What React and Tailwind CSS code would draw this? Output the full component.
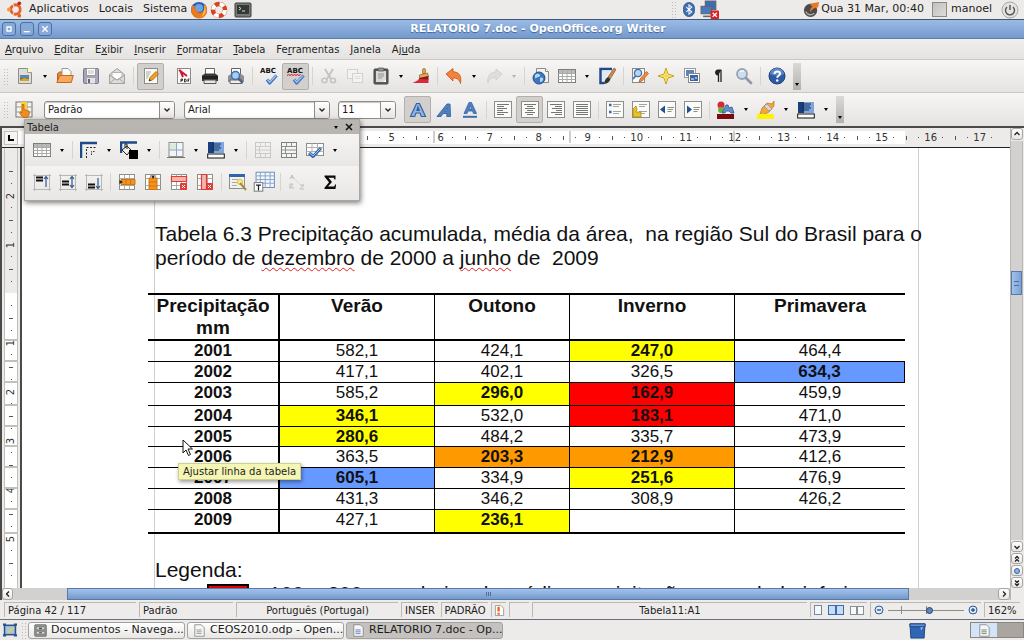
import React, { useState } from 'react';
import clsx from 'clsx';

/* ---------- icons, all drawn on an 18px grid ---------- */

const Svg = ({ children, className = 'size-[18px]' }) => (
    <svg viewBox="0 0 18 18" className={clsx('shrink-0', className)} fill="none" aria-hidden="true">
        {children}
    </svg>
);

const Page = ({ x = 3, y = 1, w = 12, h = 16 }) => (
    <rect x={x + 0.5} y={y + 0.5} width={w - 1} height={h - 1} fill="#fafaf9" stroke="#8a8c87" />
);

const NewDoc = () => (
    <Svg>
        <path d="M2.500 1.500h9l4 4v11h-13z" fill="#deded9" stroke="#8b8d88" />
        <path d="M11.500 1.500v4h4" fill="#fff" stroke="#9b9d98" />
        <rect x="4" y="8" width="9" height="6" fill="#7a6a3c" />
        <rect x="4" y="8" width="9" height="3" fill="#5f86a8" />
        <path d="M4 13l4-2 5 1v2H4z" fill="#d3a336" />
        <circle cx="14" cy="3" r="2" fill="#fff6bd" />
    </Svg>
);

const Open = () => (
    <Svg>
        <path d="M1.500 15V6.500l2-1.500h3l1 1.500h4V15z" fill="#e08a3c" stroke="#b8601b" />
        <path d="M6 1.500h6l3 3V10H6z" fill="#fbfbfb" stroke="#999" />
        <path d="M.8 15.500l3-7h13.500l-2 7z" fill="#f7a85a" stroke="#c7681c" />
    </Svg>
);

const Save = () => (
    <Svg>
        <rect x="1.500" y="1.500" width="15" height="15" rx="1" fill="#a8a6b5" stroke="#777686" />
        <rect x="4.500" y="1.500" width="9" height="7" fill="#fff" stroke="#9a98a8" />
        <path d="M6 4h6M6 6h6" stroke="#bbb" />
        <rect x="5" y="11" width="8" height="5.500" fill="#e4e3ea" />
        <rect x="6" y="12" width="2" height="4" fill="#666" />
    </Svg>
);

const Mail = () => (
    <Svg>
        <path d="M1.500 7.500L9 1.500l7.500 6v9h-15z" fill="#dcdcd9" stroke="#a2a3a0" />
        <path d="M4 5.500h10V10l-5 3-5-3z" fill="#fff" stroke="#b3b4b1" />
        <path d="M1.500 16.500L7 11.500M16.500 16.500L11 11.500M1.500 8L9 13l7.500-5" stroke="#a2a3a0" />
    </Svg>
);

const EditFile = () => (
    <Svg>
        <Page x={2} y={1} w={14} h={16} />
        <path d="M4 5h5M4 7h4M4 9h3M4 11h2" stroke="#a9aba7" />
        <path d="M7 14l1-3.500 6-6 2.500 2.500-6 6z" fill="#f3a01e" stroke="#a0620b" strokeWidth=".8" />
        <path d="M7 14l.5-2 1.500 1.500z" fill="#222" />
    </Svg>
);

const Pdf = () => (
    <Svg>
        <Page x={2} y={1} w={14} h={16} />
        <path d="M4 3l8 6M5 3l3 7" stroke="#d4152a" strokeWidth="2" />
        <path d="M6 15v-3h1.500v1.500H6M9.500 12v3h1l.7-1v-1l-.7-1zM13 15v-3h1.500M13 13.500h1" stroke="#222" strokeWidth=".9" />
    </Svg>
);

const Print = () => (
    <Svg>
        <path d="M4.500 1.500h9V8h-9z" fill="#fff" stroke="#666" />
        <path d="M1 8.500l3-2h10l3 2V14H1z" fill="#3b3b3b" />
        <rect x="1" y="9" width="16" height="3" fill="#222" />
        <path d="M3 13h12v3.500H3z" fill="#e6e6e6" stroke="#555" />
    </Svg>
);

const Preview = () => (
    <Svg>
        <path d="M4.500 1.500h9V8h-9z" fill="#fff" stroke="#666" />
        <path d="M1 9l3-2h10l3 2v6H1z" fill="#8b8e92" />
        <path d="M3 13h12v3.500H3z" fill="#eee" stroke="#666" />
        <circle cx="8.500" cy="8.500" r="4" fill="#a9cdf0" stroke="#3f6fae" strokeWidth="1.500" />
        <path d="M11.500 11.500l4 4.500" stroke="#46607f" strokeWidth="2" />
    </Svg>
);

const Check = () => (
    <>
        <path d="M7 12.500l2.700 3.500L16.500 8.500" stroke="#3f73bb" strokeWidth="3.200" strokeLinejoin="round" />
        <path d="M7.500 12.500l2.200 2.800L16 8.800" stroke="#a3c4ee" strokeWidth="1.300" />
    </>
);

const Letters = () => (
    <text x="0" y="6" fontSize="7" fontWeight="700" fontFamily="DejaVu Sans" fill="#111">ABC</text>
);

const Spell = () => (
    <Svg className="size-[18px] overflow-visible">
        <Letters />
        <Check />
    </Svg>
);

const AutoSpell = () => (
    <Svg className="size-[18px] overflow-visible">
        <Letters />
        <path d="M0 8.500l1.500-1 1.500 1 1.500-1 1.500 1 1.500-1 1.500 1 1.500-1 1.500 1 1.500-1" stroke="#d11" />
        <Check />
    </Svg>
);

const Cut = () => (
    <Svg>
        <path d="M5 2l6 10M13 2L7 12" stroke="#c4c3c1" strokeWidth="1.800" />
        <ellipse cx="4.500" cy="13.500" rx="2.500" ry="2.200" stroke="#c4c3c1" strokeWidth="1.600" />
        <ellipse cx="13" cy="13.500" rx="2.500" ry="2.200" stroke="#c4c3c1" strokeWidth="1.600" />
    </Svg>
);

const Copy = () => (
    <Svg>
        <rect x="1.500" y="2.500" width="10" height="9" fill="#f4f3f2" stroke="#d2d1cf" />
        <rect x="6.500" y="6.500" width="10" height="9" fill="#f4f3f2" stroke="#d2d1cf" />
        <path d="M8.500 9.500h6M8.500 11.500h6" stroke="#dddcda" />
    </Svg>
);

const Paste = () => (
    <Svg>
        <rect x="2" y="2" width="14" height="15" rx="1" fill="#5c5e5b" stroke="#444" />
        <rect x="4" y="4" width="10" height="11" fill="#d9dad7" />
        <rect x="6" y="1" width="6" height="3" rx="1" fill="#999" stroke="#444" strokeWidth=".7" />
        <path d="M6 7h6M6 9h6M6 11h4" stroke="#8f918d" />
        <path d="M14 12v3h-3z" fill="#fff" />
    </Svg>
);

const Brush = () => (
    <Svg>
        <path d="M10.500 3a1.500 1.500 0 113 0l-.3 3.500h-2.500z" fill="#e0ab52" stroke="#8e5f1c" strokeWidth=".7" />
        <path d="M7.500 8l8-2 1 3.500-9 2z" fill="#e0ab52" stroke="#8e5f1c" strokeWidth=".7" />
        <path d="M7.500 11l9-2v4l-10.500.5z" fill="#8c1622" />
        <path d="M1 15.500c4-1 6-4 8-3.500l7.500.5V16H1z" fill="#dc2740" />
    </Svg>
);

const Undo = () => (
    <Svg>
        <path d="M1 7l7-5.500v3.300c6 0 9 4 7.500 11.700-1-4-3.500-5.500-7.500-5.500v3z" fill="#f4823a" stroke="#c4541a" strokeWidth=".8" strokeLinejoin="round" />
    </Svg>
);

const Redo = () => (
    <Svg>
        <path d="M17 7l-6-5v3C5 5 2 9 3 16c1-4 3.500-5.500 8-5.500V13z" fill="#dededc" stroke="#cdccca" strokeWidth=".8" />
    </Svg>
);

const Link = () => (
    <Svg>
        <path d="M4.500 1.500h9l3 3v11h-12z" fill="#f2f3f2" stroke="#8a8c87" />
        <path d="M13.500 1.500v3h3" stroke="#8a8c87" fill="#fff" />
        <circle cx="7" cy="11" r="6" fill="#3d76bd" stroke="#21508d" />
        <path d="M3 8c2-2 4-1 5 0s-1 2-2 2-2 2-3 1zM8 11c2-1 4 0 3 2s-3 3-3 1z" fill="#b7d5f3" />
    </Svg>
);

const Table = () => (
    <Svg>
        <rect x=".5" y="2.500" width="17" height="13" fill="#fff" stroke="#7c7e7a" />
        <rect x="1" y="3" width="16" height="3" fill="#b9bbb7" />
        <path d="M.5 6.500h17M.5 9.500h17M.5 12.500h17M4.500 3v12.500M9 3v12.500M13.500 3v12.500" stroke="#a9aba7" />
    </Svg>
);

const Draw = () => (
    <Svg>
        <path d="M14 2H2.500v14H6" fill="#fff" stroke="#1f4b8a" strokeWidth="2.500" />
        <path d="M4 3.500h9L6 14H4z" fill="#dfe8f4" />
        <path d="M10 10l6-9 2 1.500-5.500 9z" fill="#c98a54" stroke="#7a4a22" strokeWidth=".6" />
        <path d="M6 17c0-3 2-6 4-7l2.500 2c-1 3-3 4.500-6.500 5z" fill="#333" />
    </Svg>
);

const Find = () => (
    <Svg>
        <Page x={1} y={1} w={13} h={15} />
        <circle cx="7" cy="6" r="3.600" fill="#b7d4f2" stroke="#3e6fae" strokeWidth="1.300" />
        <path d="M4.500 9L2 12" stroke="#3e6fae" strokeWidth="1.800" />
        <path d="M8 15l1-3 6.500-7.500 2 2L11 14z" fill="#f28a3c" stroke="#b8541a" strokeWidth=".7" />
    </Svg>
);

const Navigator = () => (
    <Svg>
        <path d="M9 1l2 6 6 2-6 2-2 6-2-6-6-2 6-2z" fill="#fdf08a" stroke="#c8a516" strokeLinejoin="round" />
        <path d="M9 5v8M5 9h8" stroke="#e8c93a" />
    </Svg>
);

const Gallery = () => (
    <Svg>
        <rect x="1.500" y="1.500" width="11" height="9" fill="#fff" stroke="#999" />
        <rect x="3" y="3" width="8" height="6" fill="#5a84bb" />
        <rect x="5.500" y="6.500" width="11" height="9" fill="#fff" stroke="#888" />
        <rect x="7" y="8" width="8" height="6" fill="#3a66a3" />
        <path d="M8 12h3M12 11h2" stroke="#fff" />
    </Svg>
);

const Pilcrow = () => (
    <Svg>
        <path d="M12 3v12M9.500 3v12" stroke="#222" strokeWidth="1.300" />
        <path d="M12.500 2.500H9c-4 0-4 6 0 6z" fill="#222" />
    </Svg>
);

const Zoom = () => (
    <Svg>
        <circle cx="7" cy="7" r="5" fill="#c8def4" stroke="#9aa3ad" strokeWidth="1.800" />
        <path d="M11 11l5 5" stroke="#8f99a5" strokeWidth="2.800" strokeLinecap="round" />
        <path d="M5 5c1-1.500 3-1.500 4-.5" stroke="#fff" strokeWidth="1.200" />
    </Svg>
);

const Help = () => (
    <Svg>
        <circle cx="9" cy="9" r="8" fill="#2c5ba3" stroke="#1c3f78" />
        <path d="M2 7a7 6 0 0114 0c-4 2-10 2-14 0z" fill="#5d88c8" />
        <path d="M6.500 7c0-3.500 5.500-3.200 5.500-.3 0 2-2.800 2-2.800 4" stroke="#fff" strokeWidth="2" />
        <circle cx="9.200" cy="13.500" r="1.200" fill="#fff" />
    </Svg>
);

const Styles = () => (
    <Svg>
        <rect x="1" y="1" width="16" height="15" fill="#f3f3f0" stroke="#777" />
        <path d="M1 6h16M1 11h16M12 1v15" stroke="#999" />
        <rect x="6" y="1" width="6" height="15" fill="#f7d23e" />
        <path d="M7 3.500h2v5l5 1.500c1 3 0 5-2 6.500H8L4.500 12l1-1.500L7 12z" fill="#f08d24" stroke="#b55d0b" strokeWidth=".7" />
    </Svg>
);

const Bold = () => (
    <Svg>
        <path d="M1.500 15.500L7.500 2.500h3l6 13h-4.200L11 12H7l-1.300 3.500zM8 9.500h2.200L9 6z" fill="#8fb4e3" stroke="#33629f" fillRule="evenodd" strokeWidth="1.200" />
    </Svg>
);

const Italic = () => (
    <Svg>
        <path d="M2 15.500L12 3h3l.5 12.500h-3.700L12 12.500H8L6 15.500zM9.800 10H12V7z" fill="#4f80c0" stroke="#33629f" fillRule="evenodd" strokeWidth=".9" />
    </Svg>
);

const Underline = () => (
    <Svg>
        <path d="M3 12.500L8 1.500h2.500l5 11h-3l-1-2.500H7l-1 2.500zM8 8h2.600L9.300 4.500z" fill="#4f80c0" stroke="#33629f" fillRule="evenodd" strokeWidth=".8" />
        <path d="M2 15.800h14" stroke="#3a6cb0" strokeWidth="2" />
    </Svg>
);

const Align = ({ d }) => (
    <Svg>
        <rect x=".5" y=".5" width="17" height="16" fill="#fbfbfa" stroke="#8d8f8b" />
        <path d={d} stroke="#747673" />
    </Svg>
);

const ListIcon = ({ numbered }) => (
    <Svg>
        <rect x=".5" y=".5" width="17" height="16" fill="#fbfbfa" stroke="#8d8f8b" />
        <path d="M7 3.500h8M7 5.500h6M7 10.500h8M7 12.500h6" stroke="#a2a49f" />
        {numbered ? (
            <path d="M1 16V8l3-3 1 3-1 3h5v5z" fill="#e7c22b" stroke="#a88409" strokeWidth=".7" />
        ) : (
            <path d="M3 4h2.500M3 11h2.500" stroke="#3a66a3" strokeWidth="2.500" />
        )}
    </Svg>
);

const Indent = ({ back }) => (
    <Svg>
        <rect x=".5" y=".5" width="17" height="16" fill="#fbfbfa" stroke="#8d8f8b" />
        <path d={back ? 'M2 8.500l5-4v8z' : 'M3 4.500l5 4-5 4z'} fill="#244f8f" />
        <path d="M9.500 6.500H16M9.500 8.500H15M9.500 10.500h4" stroke="#8b8d88" />
    </Svg>
);

const FontColor = () => (
    <Svg>
        <circle cx="4" cy="4" r="3.500" fill="#d8283a" />
        <circle cx="4" cy="9" r="3" fill="#62b544" />
        <path d="M5 12L9 4h2l1 3 3-1 2 6h-3l-2-2H9l-1 2z" fill="#6391cd" stroke="#2b5796" strokeWidth=".8" />
        <rect y="13" width="17" height="5" fill="#7c0a0c" />
    </Svg>
);

const Highlight = () => (
    <Svg>
        <path d="M3 13l2-6 5-5 5 1 2-3v5l-5 6-6 3z" fill="#f2a83c" stroke="#b8741a" strokeWidth=".7" />
        <path d="M7 5l5 5 3-2-5-5z" fill="#d5d8dc" stroke="#888" strokeWidth=".6" />
        <rect y="13" width="17" height="5" fill="#fdf500" />
    </Svg>
);

const Background = () => (
    <Svg>
        <path d="M1 1h16v11H1z" fill="#7ea6dc" />
        <path d="M1 1h6v11H1z" fill="#163f7c" />
        <path d="M5 3h9M5 5h8M5 7h9M5 9h7" stroke="#10305f" />
        <rect x=".7" y="13" width="16.600" height="4" fill="#fff" stroke="#111" />
    </Svg>
);

const LineStyle = () => (
    <Svg>
        <path d="M1 17V2h16" stroke="#1d4a87" strokeWidth="2.500" />
        <path d="M6.500 17V6.500H17" stroke="#222" strokeDasharray="2 1.500" />
        <path d="M11.500 14v-3.500H15" stroke="#333" strokeDasharray="1.500 1" />
    </Svg>
);

const LineColor = () => (
    <Svg>
        <path d="M1 12V1.500h16" stroke="#1d4a87" strokeWidth="2.500" />
        <path d="M2 9l5-4 4 4-4 5z" fill="#eee" stroke="#222" />
        <path d="M5 7V3h2v5" stroke="#222" />
        <rect x="9" y="9" width="9" height="9" fill="#000" />
    </Svg>
);

const Borders = () => (
    <Svg>
        <rect x="2" y="1.500" width="14" height="14" fill="#f4f4f2" stroke="#8c8e8a" />
        <rect x="3" y="2.500" width="6" height="6" fill="#dcebd9" />
        <path d="M9.500 1.500v14M2 9h14" stroke="#8ba6c9" />
        <path d="M0 16.500h18" stroke="#777" />
    </Svg>
);

const CellGrid = ({ faded, split }) => (
    <Svg>
        <g opacity={faded ? 0.35 : 1}>
            <rect x="1.500" y="1.500" width="15" height="15" fill="#f5f5f3" stroke="#7d7f7b" />
            <path d="M1.500 5.500h15M1.500 12.500h15M6.500 1.500v4M11.500 1.500v4M6.500 12.500v4M11.500 12.500v4" stroke="#8c8e8a" />
            {split && <path d="M1.500 9h15M5.500 5v8" stroke="#8c8e8a" />}
        </g>
    </Svg>
);

const AutoFormat = () => (
    <Svg>
        <rect x=".5" y="2.500" width="17" height="12" fill="#fff" stroke="#8c8e8a" />
        <path d="M.5 6.500h17M.5 10.500h17M6 2.500v12M11.500 2.500v12" stroke="#b1b3af" />
        <path d="M3 12l4 3.500L15 7" stroke="#3468ae" strokeWidth="3" strokeLinejoin="round" />
        <path d="M3.500 12l3.500 3L14.500 7.500" stroke="#a5c5ee" />
    </Svg>
);

const VAlign = ({ lines, arrow }) => (
    <Svg>
        <path d="M1.500 1v17M16.500 1v17M0 2.500h18M0 16.500h18" stroke="#b7b8b5" />
        <path d={lines} stroke="#111" strokeWidth="1.800" />
        <path d={arrow} stroke="#315a90" strokeWidth="1.200" />
    </Svg>
);

const InsertCells = ({ column }) => (
    <Svg>
        <rect x="1.500" y="1.500" width="15" height="15" fill="#fff" stroke="#8c8e8a" />
        <path d="M1.500 5.500h15M1.500 12.500h15M6.500 1.500v15M11.500 1.500v15" stroke="#a9aba7" />
        {column ? (
            <path d="M5 5h8v11.500H5zM5 9h8M5 13h8" fill="#f6931e" stroke="#d07412" />
        ) : (
            <path d="M3 6.500h14v5H3zM8 6.500v5M12.500 6.500v5" fill="#f6931e" stroke="#d07412" />
        )}
        <path d={column ? 'M7 2.500h4L9 6z' : 'M1.500 7v4L5 9z'} fill="#222" />
    </Svg>
);

const DeleteCells = ({ column }) => (
    <Svg>
        <rect x="1.500" y="1.500" width="15" height="15" fill="#fff" stroke="#8c8e8a" />
        <path d="M1.500 5.500h15M1.500 12.500h15M6.500 1.500v15M11.500 1.500v15" stroke="#a9aba7" />
        <path d={column ? 'M5.500 1.500h5v15h-5z' : 'M1.500 3.500h15v5h-15z'} fill="#f7b5b0" stroke="#e03a35" strokeWidth="1.200" />
        <rect x="10" y="10" width="7" height="7" rx="1" fill="#e23c36" />
        <path d="M12 12l3 3M15 12l-3 3" stroke="#fff" />
    </Svg>
);

const AutoFormatStyles = () => (
    <Svg>
        <rect x=".5" y="1.500" width="15" height="14" fill="#f2f1ea" stroke="#8c8e8a" />
        <rect x="0" y="1" width="16" height="3" fill="#2f65ad" />
        <path d="M3 6.500h6M3 9.500h5M3 12.500h5" stroke="#a9aba7" />
        <circle cx="11" cy="9" r="2.500" fill="#fff29a" stroke="#d8bb2c" />
        <path d="M11 10l6 7" stroke="#a58a3d" strokeWidth="2" />
    </Svg>
);

const Properties = () => (
    <Svg className="size-[22px]">
        <rect x="2.500" y="1" width="15" height="12.500" fill="#f4f7fb" stroke="#6c8cb8" strokeWidth=".8" />
        <path d="M2.500 4h15M2.500 7h15M2.500 10h15M6 1v12.500M10 1v12.500M14 1v12.500" stroke="#89a4c9" strokeWidth=".8" />
        <rect x="1" y="9.500" width="7" height="7" fill="#fff" stroke="#777" strokeWidth=".8" />
        <path d="M2.500 11.500h4M4.500 11.500V16" stroke="#222" />
    </Svg>
);

const Sort = () => (
    <Svg>
        <path d="M2 6l2-4 2 4M3 4.500h2" stroke="#bebdbb" />
        <path d="M2 15v-4h3l-3 4h4M12 12h4l-4 4h4" stroke="#bebdbb" />
        <path d="M6 6l6 5" stroke="#cfcecc" strokeDasharray="1.500 1" />
    </Svg>
);

const Sum = () => (
    <Svg>
        <path d="M3.500 2.500h11v4h-1l-.8-1.800H7.500L11 9l-4 4.500h6.300l.8-2h1L14.500 16h-11v-1.200L8 9.200 3.500 3.700z" fill="#0a0a0a" />
    </Svg>
);

/* ---------- toolbar pieces ---------- */

const ToolButton = ({ label, icon, pressed }) => (
    <button
        type="button"
        title={label}
        aria-label={label}
        aria-pressed={pressed}
        className={clsx(
            'flex shrink-0 items-center justify-center h-[27px]',
            pressed ? 'w-[27px] rounded-[2px] border border-[#b3b0ac] bg-[#d2cfcc]' : 'w-[26px]'
        )}
    >
        {icon}
    </button>
);

const DropArrow = ({ label, faded }) => (
    <button type="button" aria-label={`${label}, opções`} className="flex h-[27px] w-[14px] shrink-0 items-center justify-center">
        <span
            className={clsx(
                'border-x-2 border-t-[3px] border-x-transparent',
                faded ? 'border-t-[#b5b3b0]' : 'border-t-black'
            )}
        />
    </button>
);

const Separator = ({ hidden }) => (
    <span className={clsx('mx-[3px] h-[18px] w-px shrink-0', hidden ? 'bg-transparent' : 'bg-[#d6d3d0]')} />
);

const Overflow = () => (
    <button
        type="button"
        aria-label="Mais botões"
        className="ml-[3px] flex h-[27px] w-2 shrink-0 items-end justify-center bg-linear-to-b from-[#dcdad8] to-[#b4b1ad] pb-1"
    >
        <span className="border-x-2 border-t-[3px] border-x-transparent border-t-black" />
    </button>
);

const ToolItems = ({ items }) =>
    items.map((item, i) => {
        if (item === '|') return <Separator key={i} />;
        if (item === ' ') return <Separator key={i} hidden />;
        return (
            <React.Fragment key={i}>
                <ToolButton label={item.label} icon={item.icon} pressed={item.pressed} />
                {item.menu && <DropArrow label={item.label} faded={item.faded} />}
            </React.Fragment>
        );
    });

const Combo = ({ label, value, className }) => (
    <div className={clsx('relative h-[18px] shrink-0', className)}>
        <select
            aria-label={label}
            defaultValue={value}
            className="block h-full w-full appearance-none rounded-[3px] border border-[#8f8b86] bg-white pl-[3px] text-[10px] leading-[16px] text-[#1a1a1a] shadow-[inset_0_1px_1px_#c9c6c2]"
        >
            <option>{value}</option>
        </select>
        <span className="pointer-events-none absolute inset-y-px right-px flex w-[15px] items-center justify-center rounded-r-[2px] border-l border-[#8f8b86] bg-linear-to-b from-white to-[#e6e4e2]">
            <svg viewBox="0 0 8 6" className="h-[6px] w-2" fill="none">
                <path d="M1.500 1.500L4 4l2.500-2.500" stroke="#222" strokeWidth="1.300" />
            </svg>
        </span>
    </div>
);

const Grip = () => (
    <span className="h-[17px] w-[5px] shrink-0 bg-[radial-gradient(#c0bdb9_1px,transparent_1px)] bg-[size:3px_3px]" />
);

const mainItems = [
    { label: 'Novo', icon: <NewDoc />, menu: true },
    { label: 'Abrir', icon: <Open /> },
    { label: 'Salvar', icon: <Save /> },
    { label: 'Enviar por e-mail', icon: <Mail /> },
    '|',
    { label: 'Editar arquivo', icon: <EditFile />, pressed: true },
    ' ',
    { label: 'Exportar como PDF', icon: <Pdf /> },
    { label: 'Imprimir', icon: <Print /> },
    { label: 'Visualizar página', icon: <Preview /> },
    '|',
    { label: 'Verificação ortográfica', icon: <Spell /> },
    { label: 'Autoverificação', icon: <AutoSpell />, pressed: true },
    '|',
    { label: 'Cortar', icon: <Cut /> },
    { label: 'Copiar', icon: <Copy /> },
    { label: 'Colar', icon: <Paste />, menu: true },
    { label: 'Pincel de estilo', icon: <Brush /> },
    '|',
    { label: 'Desfazer', icon: <Undo />, menu: true },
    { label: 'Refazer', icon: <Redo />, menu: true, faded: true },
    '|',
    { label: 'Hiperlink', icon: <Link /> },
    { label: 'Tabela', icon: <Table />, menu: true },
    { label: 'Desenho', icon: <Draw /> },
    '|',
    { label: 'Localizar', icon: <Find /> },
    { label: 'Navegador', icon: <Navigator /> },
    { label: 'Galeria', icon: <Gallery /> },
    { label: 'Caracteres não imprimíveis', icon: <Pilcrow /> },
    { label: 'Zoom', icon: <Zoom /> },
    '|',
    { label: 'Ajuda', icon: <Help /> }
];

const formatItems = [
    { label: 'Negrito', icon: <Bold />, pressed: true },
    { label: 'Itálico', icon: <Italic /> },
    { label: 'Sublinhado', icon: <Underline /> },
    '|',
    { label: 'Alinhar à esquerda', icon: <Align d="M3 3.500h12M3 5.500h7M3 7.500h10M3 9.500h6M3 11.500h11M3 13.500h7" /> },
    { label: 'Centralizar', icon: <Align d="M3 3.500h12M6 5.500h6M4 7.500h10M6 9.500h6M4 11.500h10M6 13.500h6" />, pressed: true },
    { label: 'Alinhar à direita', icon: <Align d="M3 3.500h12M8 5.500h7M5 7.500h10M9 9.500h6M4 11.500h11M8 13.500h7" /> },
    { label: 'Justificar', icon: <Align d="M3 3.500h12M3 5.500h12M3 7.500h12M3 9.500h12M3 11.500h12M3 13.500h12" /> },
    '|',
    { label: 'Marcadores', icon: <ListIcon /> },
    { label: 'Numeração', icon: <ListIcon numbered /> },
    { label: 'Diminuir recuo', icon: <Indent back /> },
    { label: 'Aumentar recuo', icon: <Indent /> },
    '|',
    { label: 'Cor da fonte', icon: <FontColor />, menu: true },
    { label: 'Realçar', icon: <Highlight />, menu: true },
    { label: 'Plano de fundo', icon: <Background />, menu: true }
];

const tableRowOne = [
    { label: 'Tabela', icon: <Table />, menu: true },
    '|',
    { label: 'Estilo de linha', icon: <LineStyle />, menu: true },
    { label: 'Cor da linha', icon: <LineColor />, menu: true },
    '|',
    { label: 'Bordas', icon: <Borders />, menu: true },
    { label: 'Cor do plano de fundo', icon: <Background />, menu: true },
    '|',
    { label: 'Mesclar células', icon: <CellGrid faded split /> },
    { label: 'Dividir células', icon: <CellGrid split /> },
    { label: 'Otimizar', icon: <AutoFormat />, menu: true }
];

const tableRowTwo = [
    { label: 'Em cima', icon: <VAlign lines="M3 4.500h7M3 7.500h7" arrow="M13 14V4M11 6l2-2.500L15 6" /> },
    { label: 'Centralizar verticalmente', icon: <VAlign lines="M3 8.500h7M3 11.500h7" arrow="M13 14V4M11 6l2-2.500L15 6M11 12l2 2.500 2-2.500" /> },
    { label: 'Embaixo', icon: <VAlign lines="M3 11.500h7M3 14.500h7" arrow="M13 5v10M11 13l2 2.500 2-2.500" /> },
    '|',
    { label: 'Inserir linha', icon: <InsertCells /> },
    { label: 'Inserir coluna', icon: <InsertCells column /> },
    { label: 'Excluir linha', icon: <DeleteCells /> },
    { label: 'Excluir coluna', icon: <DeleteCells column /> },
    '|',
    { label: 'AutoFormatação', icon: <AutoFormatStyles /> },
    { label: 'Propriedades da tabela', icon: <Properties /> },
    '|',
    { label: 'Classificar', icon: <Sort /> },
    ' ',
    { label: 'Soma', icon: <Sum /> }
];

/* ---------- desktop panel, title and menus ---------- */

const TopPanel = () => (
    <header className="flex h-[19px] shrink-0 items-center bg-[#edebe9] text-[11px] text-[#1c1c1c]">
        <nav className="flex items-center gap-[10px] pl-[7px]">
            <a href="#aplicativos" className="flex items-center gap-[5px]">
                <Svg className="size-[17px]">
                    <circle cx="9" cy="9" r="5" stroke="#e8602c" strokeWidth="3" strokeDasharray="9.500 1" />
                    <circle cx="2" cy="9" r="2" fill="#f29a3f" />
                    <circle cx="13" cy="2.500" r="2" fill="#c22a20" />
                    <circle cx="13" cy="15.500" r="2" fill="#e8602c" />
                </Svg>
                Aplicativos
            </a>
            <a href="#locais">Locais</a>
            <a href="#sistema">Sistema</a>
        </nav>
        <div className="flex items-center gap-[2px] pl-[3px]">
            <button type="button" aria-label="Firefox">
                <Svg>
                    <circle cx="9" cy="9" r="8" fill="#2f5fb0" />
                    <circle cx="9" cy="7" r="4" fill="#6fa4e0" />
                    <path d="M2 4c1 1 2 1 3 1-1 2 0 4 2 4-1 2 2 4 5 2 3-2 3-5 2-8 5 4 4 13-4 14.500C3 18-.5 11 2 4z" fill="#ee7a1c" />
                    <path d="M14 4c3 4 2 10-3 12 3-4 4-8 3-12z" fill="#f9c440" />
                </Svg>
            </button>
            <button type="button" aria-label="Ajuda">
                <Svg>
                    <circle cx="9" cy="9" r="6" stroke="#d8431f" strokeWidth="4.500" />
                    <circle cx="9" cy="9" r="6" stroke="#fff" strokeWidth="4" strokeDasharray="4.700 4.700" />
                </Svg>
            </button>
            <button type="button" aria-label="Terminal" className="ml-1">
                <Svg>
                    <rect x="1" y="2" width="16" height="14" rx="1" fill="#777a75" stroke="#3c3e3b" />
                    <rect x="3" y="4" width="12" height="9" fill="#333a36" />
                    <path d="M5 6l2 1.500L5 9M8 10h3" stroke="#ddd" />
                </Svg>
            </button>
        </div>
        <div className="ml-auto flex items-center pr-[5px]">
            <Grip />
            <button type="button" aria-label="Bluetooth" className="ml-[6px]">
                <Svg className="h-[17px] w-[14px]">
                    <rect x="2" y="0" width="14" height="18" rx="7" fill="#3f6fb3" stroke="#24508f" />
                    <path d="M5.500 6l7 6-3.500 3V3l3.500 3-7 6" stroke="#fff" strokeWidth="1.300" />
                </Svg>
            </button>
            <button type="button" aria-label="Rede desconectada" className="ml-1">
                <Svg className="size-[19px]">
                    <rect x="5" y="1" width="10" height="8" fill="#3d6cb0" stroke="#5a6575" />
                    <rect x="1" y="6" width="10" height="7" fill="#4b79bc" stroke="#5a6575" />
                    <path d="M3 15.500h7" stroke="#666" strokeWidth="1.500" />
                    <rect x="10" y="10" width="8" height="8" rx="1" fill="#dc1f1f" />
                    <path d="M12 12l4 4M16 12l-4 4" stroke="#fff" strokeWidth="1.300" />
                </Svg>
            </button>
            <button type="button" aria-label="Atualizações" className="ml-[84px]">
                <Svg className="size-[17px]">
                    <circle cx="8" cy="10" r="7" fill="#4c4b49" />
                    <path d="M7 3l10-2-1 6c-4 0-7 2-8 5-1-2 0-5 2-6z" fill="#e8792a" />
                    <path d="M3 11c1 3 5 5 9 2" stroke="#aaa" strokeWidth="1.500" />
                </Svg>
            </button>
            <time className="ml-px">Qua 31 Mar, 00:40</time>
            <span className="ml-[8px] size-[15px] border border-[#8d8a86] bg-linear-to-br from-[#c2c0bd] to-[#dedcda]" />
            <span className="ml-1">manoel</span>
            <button type="button" aria-label="Desligar" className="ml-[9px]">
                <Svg>
                    <circle cx="9" cy="9" r="8" fill="#e4e2e0" stroke="#aaa7a3" />
                    <path d="M6 6a4.500 4.500 0 106 0M9 4v5" stroke="#55534f" strokeWidth="1.400" />
                </Svg>
            </button>
        </div>
    </header>
);

const windowButtons = [
    { label: 'Maximizar', d: 'M6 6h6v6H6z' },
    { label: 'Minimizar', d: 'M4 13h9' },
    { label: 'Fechar', d: 'M5 5l8 8M13 5l-8 8' }
];

const TitleBar = () => (
    <div className="flex h-5 shrink-0 items-center border-y border-t-[#3f5674] border-b-[#5e80ae] bg-linear-to-b from-[#9bbbe6] to-[#739acb] pl-[2px]">
        <div className="flex gap-1">
            {windowButtons.map((b) => (
                <button
                    key={b.label}
                    type="button"
                    aria-label={b.label}
                    className="flex size-[14px] items-center justify-center rounded-[3px] border border-[#4c70a3] bg-[#86a9d8]"
                >
                    <Svg className="size-[12px]">
                        <path d={b.d} stroke="#fff" strokeWidth="2" />
                    </Svg>
                </button>
            ))}
        </div>
        <h1 className="flex-1 text-center text-[11px] font-bold text-white [text-shadow:0_1px_1px_#3f639a]">
            RELATORIO 7.doc - OpenOffice.org Writer
        </h1>
    </div>
);

// [before, mnemonic, after]
const menus = [
    ['', 'A', 'rquivo'],
    ['', 'E', 'ditar'],
    ['E', 'x', 'ibir'],
    ['', 'I', 'nserir'],
    ['', 'F', 'ormatar'],
    ['', 'T', 'abela'],
    ['Fe', 'r', 'ramentas'],
    ['', 'J', 'anela'],
    ['Aj', 'u', 'da']
];

const MenuBar = () => (
    <nav className="flex h-[21px] shrink-0 items-center gap-[11px] border-b border-[#cbc8c4] bg-linear-to-b from-[#f0efed] to-[#e5e3e1] pl-[5px] text-[10px] text-[#222]">
        {menus.map(([before, key, after]) => (
            <button key={before + key + after} type="button">
                {before}
                <span className="underline underline-offset-1">{key}</span>
                {after}
            </button>
        ))}
    </nav>
);

const TableToolbar = () => (
    <div className="absolute left-[24px] top-[119px] z-10 border border-[#aaa7a3] bg-[#f1f0ee] shadow-[1px_2px_5px_#00000080]" role="toolbar" aria-label="Tabela">
        <div className="flex h-[14px] items-center bg-[#b9b6b2] pl-[2px] pr-[4px] text-[10px] text-[#222]">
            <span className="flex-1">Tabela</span>
            <DropArrow label="Tabela" />
            <button type="button" aria-label="Fechar barra Tabela" className="flex w-[12px] justify-center">
                <svg viewBox="0 0 8 8" className="size-2">
                    <path d="M1 1l6 6M7 1L1 7" stroke="#111" strokeWidth="1.500" />
                </svg>
            </button>
        </div>
        <div className="flex h-[32px] items-center bg-linear-to-b from-[#f6f5f4] to-[#e9e7e5] pl-1 pr-[17px]">
            <ToolItems items={tableRowOne} />
        </div>
        <div className="flex h-[34px] items-center bg-linear-to-b from-[#f4f3f2] to-[#e9e7e5] pb-[2px] pl-1">
            <ToolItems items={tableRowTwo} />
        </div>
    </div>
);

/* ---------- rulers ---------- */

const rulerUnits = ['2', '1', '', '1', '2', '3', '4', '5', '6', '7', '8', '9', '10', '11', '12', '13', '14', '15', '16', '17'];
const columnMarks = ['left-[433px]', 'left-[569px]', 'left-[733px]'];

const HorizontalRuler = () => (
    <div className="relative flex h-[19px] shrink-0 items-center overflow-hidden bg-[#edebe9] pl-[2px] text-[10px] text-[#333]">
        <button type="button" aria-label="Tipo de tabulação" className="flex size-[14px] shrink-0 items-center justify-center border border-[#c3c0bc] bg-[#f5f4f3]">
            <span className="size-[6px] border-b-2 border-l-2 border-black" />
        </button>
        <div className="flex h-[13px] min-w-0 flex-1 items-center overflow-hidden bg-linear-to-r from-white from-[887px] to-[#edebe9] to-[887px]">
            {rulerUnits.map((n, i) => (
                <div key={i} className="grid h-[13px] w-[49px] shrink-0 grid-cols-4 items-center">
                    <span className="mx-auto h-[4px] w-px bg-[#555]" />
                    <span className="mx-auto size-px bg-[#555]" />
                    <span className="flex justify-center leading-[13px]">{n}</span>
                    <span className="mx-auto size-px bg-[#555]" />
                </div>
            ))}
        </div>
        {columnMarks.map((mark) => (
            <span key={mark} className={clsx('absolute top-[3px] -ml-[2px] h-[12px] w-[2px] bg-[#c4c1bd]/80', mark)} />
        ))}
    </div>
);

const sideUnits = ['2', '1', '', '1', '2', '3', '4', '5', ''];
const rowMarks = [
    'top-[192px]', 'top-[213px]', 'top-[234px]', 'top-[257px]', 'top-[278px]',
    'top-[298px]', 'top-[319px]', 'top-[340px]', 'top-[361px]', 'top-[385px]'
];

const VerticalRuler = () => (
    <div className="relative w-[20px] shrink-0 overflow-hidden border-r-2 border-[#4a4a4a] bg-[#edebe9] pl-[2px] text-[10px] text-[#333]">
        <div className="h-full w-[14px] border-x border-[#c3c0bc] bg-linear-to-b from-[#edebe9] from-[145px] via-white via-[145px] to-white to-[385px]">
            <div className="pt-[17px]">
                {sideUnits.map((n, i) => (
                    <div key={i} className="grid h-[49px] grid-rows-4 items-center justify-items-center">
                        <span className="h-px w-[4px] bg-[#555]" />
                        <span className="size-px bg-[#555]" />
                        <span className="-rotate-90 leading-[12px]">{n}</span>
                        <span className="size-px bg-[#555]" />
                    </div>
                ))}
            </div>
        </div>
        {rowMarks.map((mark) => (
            <span key={mark} className={clsx('absolute left-[2px] h-[2px] w-[14px] -translate-y-px bg-[#c4c1bd]', mark)} />
        ))}
    </div>
);

/* ---------- document ---------- */

const fills = {
    yellow: 'bg-[#ffff00]',
    red: 'bg-[#ff0000]',
    orange: 'bg-[#ff9900]',
    blue: 'bg-[#6699ff]'
};

// a cell is a value, or [value, fill] when it is highlighted
const rows = [
    { year: '2001', height: 'h-[21px]', cells: ['582,1', '424,1', ['247,0', 'yellow'], '464,4'] },
    { year: '2002', height: 'h-[21px]', cells: ['417,1', '402,1', '326,5', ['634,3', 'blue']] },
    { year: '2003', height: 'h-[23px]', cells: ['585,2', ['296,0', 'yellow'], ['162,9', 'red'], '459,9'] },
    { year: '2004', height: 'h-[21px]', cells: [['346,1', 'yellow'], '532,0', ['183,1', 'red'], '471,0'] },
    { year: '2005', height: 'h-[20px]', cells: [['280,6', 'yellow'], '484,2', '335,7', '473,9'] },
    { year: '2006', height: 'h-[21px]', cells: ['363,5', ['203,3', 'orange'], ['212,9', 'orange'], '412,6'] },
    { year: '2007', height: 'h-[21px]', cells: [['605,1', 'blue'], '334,9', ['251,6', 'yellow'], '476,9'] },
    { year: '2008', height: 'h-[21px]', cells: ['431,3', '346,2', '308,9', '426,2'] },
    { year: '2009', height: 'h-[24px]', cells: ['427,1', ['236,1', 'yellow'], '', ''] }
];

const RainTable = () => (
    <table className="w-full table-fixed border-separate border-spacing-0 border-t-2 border-black text-center">
        <colgroup>
            <col className="w-[132px]" />
            <col className="w-[155px]" />
            <col className="w-[135px]" />
            <col className="w-[165px]" />
            <col />
        </colgroup>
        <thead className="text-[19px] leading-[22px]">
            <tr className="h-[46px] align-top">
                {['Precipitação mm', 'Verão', 'Outono', 'Inverno', 'Primavera'].map((h, i) => (
                    <th
                        key={h}
                        scope="col"
                        className={clsx(
                            'border-b-2 border-black p-0 font-bold',
                            i === 0 && 'border-r-2',
                            i > 0 && i < 4 && 'border-r'
                        )}
                    >
                        {h}
                    </th>
                ))}
            </tr>
        </thead>
        <tbody className="text-[17px] leading-[19px]">
            {rows.map((row, r) => (
                <tr key={row.year} className={clsx('align-top', row.height)}>
                    <th scope="row" className={clsx('border-r-2 border-black p-0 font-bold', r === rows.length - 1 ? 'border-b-2' : 'border-b')}>
                        {row.year}
                    </th>
                    {row.cells.map((cell, c) => {
                        const [value, fill] = Array.isArray(cell) ? cell : [cell, null];
                        return (
                            <td
                                key={c}
                                className={clsx(
                                    'border-black p-0',
                                    r === rows.length - 1 ? 'border-b-2' : 'border-b',
                                    (c < 3 || fill) && 'border-r',
                                    fill && 'font-bold',
                                    fill && fills[fill]
                                )}
                            >
                                {value}
                            </td>
                        );
                    })}
                </tr>
            ))}
        </tbody>
    </table>
);

const Misspelled = ({ children }) => (
    <span className="underline decoration-[#e02020] decoration-wavy decoration-1 underline-offset-2 [text-decoration-skip-ink:none]">
        {children}
    </span>
);

const DocumentPage = () => (
    <main className="relative min-w-0 flex-1 overflow-hidden bg-white pl-[132px] pr-[91px] font-['Liberation_Sans',Arial,sans-serif] text-[21px] leading-[24px] text-[#111]">
        <article className="h-full border-x border-[#cfcfcf] pt-[74px]">
            <p className="-mr-4 whitespace-pre">
                Tabela 6.3 Precipitação acumulada, média da área,  na região Sul do Brasil para o{'\n'}
                período de <Misspelled>dezembro</Misspelled> de 2000 a <Misspelled>junho</Misspelled> de  2009
            </p>
            <div className="-ml-[7px] mr-[13px] mt-[23px]">
                <RainTable />
            </div>
            <p className="mt-6">Legenda:</p>
            <p className="flex gap-5 whitespace-nowrap pl-[52px]">
                <span className="mt-[2px] h-5 w-[42px] border-2 border-black bg-[#e60000]" />
                100 a 200 mm abaixo da média, precipitação acumulada inferior
            </p>
        </article>
        <svg viewBox="0 0 12 18" className="absolute left-[160px] top-[291px] h-[18px] w-3" aria-hidden="true">
            <path d="M1 1v13l3-3 2.500 5.500 2-1L6 10h4.500z" fill="#fff" stroke="#111" strokeLinejoin="round" />
        </svg>
        <div
            role="tooltip"
            className="absolute left-[156px] top-[315px] border border-[#d0d090] bg-[#f5f6b4] px-1 font-['DejaVu_Sans',sans-serif] text-[10px] leading-[15px] text-[#222] shadow-[1px_2px_4px_#00000066]"
        >
            Ajustar linha da tabela
        </div>
    </main>
);

/* ---------- scroll bars ---------- */

const scrollButton =
    'flex shrink-0 items-center justify-center rounded-[3px] border border-[#a8a5a1] bg-linear-to-b from-white to-[#e8e6e4]';

const Glyph = ({ d }) => (
    <svg viewBox="0 0 8 8" className="size-2" fill="none">
        <path d={d} stroke="#222" strokeWidth="1.300" />
    </svg>
);

const VerticalScroll = () => (
    <div className="mr-px flex w-[13px] shrink-0 flex-col gap-px border-l border-[#bbb8b4] bg-[#edebe9] pb-[12px]">
        <button type="button" aria-label="Rolar para cima" className={clsx(scrollButton, 'h-[12px]')}>
            <Glyph d="M1.500 5L4 2.500 6.500 5" />
        </button>
        <div className="flex flex-1 flex-col border-r border-[#bbb8b4] bg-[#d3d1cf] pt-[130px]">
            <div className="flex h-[24px] items-center justify-center border border-[#5878a5] bg-linear-to-r from-[#a3c2ec] to-[#7ba2d6]">
                <span className="h-[5px] w-[5px] border-y border-[#4d6fa0]" />
            </div>
        </div>
        <button type="button" aria-label="Rolar para baixo" className={clsx(scrollButton, 'h-[11px]')}>
            <Glyph d="M1.500 3L4 5.500 6.500 3" />
        </button>
        <button type="button" aria-label="Página anterior" className={clsx(scrollButton, 'h-[11px]')}>
            <Glyph d="M2 3.500l2-2 2 2M2 6.500l2-2 2 2" />
        </button>
        <button type="button" aria-label="Navegação" className={clsx(scrollButton, 'h-[11px]')}>
            <span className="size-[6px] rounded-full border border-[#3465a4] bg-[#8db2e3]" />
        </button>
        <button type="button" aria-label="Próxima página" className={clsx(scrollButton, 'h-[11px]')}>
            <Glyph d="M2 1.500l2 2 2-2M2 4.500l2 2 2-2" />
        </button>
    </div>
);

const HorizontalScroll = () => (
    <div className="flex h-[12px] shrink-0 bg-[#d3d1cf]">
        <button type="button" aria-label="Rolar para a esquerda" className={clsx(scrollButton, 'w-[11px]')}>
            <Glyph d="M5 1.500L2.500 4 5 6.500" />
        </button>
        <div className="flex flex-1 pl-[54px] pr-[89px]">
            <div className="flex flex-1 items-center justify-center border border-[#5878a5] bg-linear-to-b from-[#a3c2ec] to-[#739acb]">
                <span className="h-[4px] w-[3px] border-x border-[#4d6fa0]" />
                <span className="ml-px h-[4px] w-px bg-[#4d6fa0]" />
            </div>
        </div>
        <button type="button" aria-label="Rolar para a direita" className={clsx(scrollButton, 'w-[12px]')}>
            <Glyph d="M3 1.500L5.500 4 3 6.500" />
        </button>
    </div>
);

/* ---------- status bar and task bar ---------- */

const StatusCell = ({ className, children }) => (
    <div className={clsx('flex h-[15px] items-center whitespace-nowrap border-l border-t border-[#bcb9b5] px-[3px]', className)}>
        {children}
    </div>
);

const StatusBar = ({ zoom, setZoom }) => (
    <footer className="flex h-5 shrink-0 items-center gap-[3px] border-b border-[#66707f] bg-[#eeecea] px-1 text-[10px] text-[#222]">
        <StatusCell className="w-[132px]">Página 42 / 117</StatusCell>
        <StatusCell className="w-[94px]">Padrão</StatusCell>
        <StatusCell className="w-[162px] justify-center">Português (Portugal)</StatusCell>
        <StatusCell className="w-[37px] justify-center">INSER</StatusCell>
        <StatusCell className="w-[47px] justify-center">PADRÃO</StatusCell>
        <StatusCell className="w-[15px] justify-center">
            <svg viewBox="0 0 12 12" className="size-[11px] shrink-0" fill="none">
                <path d="M1.500.5h6l3 3v8h-9z" fill="#fff" stroke="#999" />
                <path d="M5 2v5M5 8.500v2" stroke="#e8641b" strokeWidth="2.500" />
            </svg>
        </StatusCell>
        <StatusCell className="w-[20px]" />
        <StatusCell className="min-w-0 flex-1 justify-center">Tabela11:A1</StatusCell>
        <StatusCell className="w-[57px] justify-between">
            <button type="button" aria-label="Página única" className="h-[10px] w-[8px] border border-[#7a8798] bg-[#f3f8ff]" />
            <button type="button" aria-label="Várias páginas" className="flex">
                <span className="h-[10px] w-[8px] border border-[#3b6ba8] bg-[#c6ddf8]" />
                <span className="h-[10px] w-[8px] border border-[#3b6ba8] bg-[#c6ddf8]" />
            </button>
            <button type="button" aria-label="Modo livro" className="flex">
                <span className="h-[9px] w-[7px] border border-[#8a9099] bg-[#f7f9fb]" />
                <span className="h-[9px] w-[7px] border border-[#8a9099] bg-[#f7f9fb]" />
            </button>
        </StatusCell>
        <StatusCell className="w-[111px] gap-1">
            <button type="button" aria-label="Reduzir" onClick={() => setZoom(zoom - 5)}>
                <svg viewBox="0 0 10 10" className="size-[10px]" fill="none">
                    <circle cx="5" cy="5" r="4" fill="#dfeafa" stroke="#2d5a98" />
                    <path d="M3 5h4" stroke="#2d5a98" strokeWidth="1.400" />
                </svg>
            </button>
            <input
                type="range"
                aria-label="Zoom"
                min="20"
                max="280"
                value={zoom}
                onChange={(e) => setZoom(Number(e.target.value))}
                className="h-[8px] min-w-0 flex-1 appearance-none bg-[linear-gradient(#8f8c87,#8f8c87),linear-gradient(#8f8c87,#8f8c87),linear-gradient(#8f8c87,#8f8c87)] bg-[size:100%_1px,1px_8px,1px_8px] bg-[position:center,17%_center,50%_center] bg-no-repeat [&::-webkit-slider-thumb]:size-[7px] [&::-webkit-slider-thumb]:appearance-none [&::-webkit-slider-thumb]:rounded-full [&::-webkit-slider-thumb]:border [&::-webkit-slider-thumb]:border-[#24466f] [&::-webkit-slider-thumb]:bg-[#5d87b8]"
            />
            <button type="button" aria-label="Ampliar" onClick={() => setZoom(zoom + 5)}>
                <svg viewBox="0 0 10 10" className="size-[10px]" fill="none">
                    <circle cx="5" cy="5" r="4" fill="#dfeafa" stroke="#2d5a98" />
                    <path d="M3 5h4M5 3v4" stroke="#2d5a98" strokeWidth="1.400" />
                </svg>
            </button>
        </StatusCell>
        <StatusCell className="w-[36px]">{zoom}%</StatusCell>
    </footer>
);

const TaskButton = ({ children, active, icon }) => (
    <button
        type="button"
        className={clsx(
            'flex h-[17px] w-[157px] items-center gap-1 whitespace-nowrap rounded-[3px] border border-[#a5a29e] pl-[5px]',
            active ? 'bg-[#c4c1be]' : 'bg-linear-to-b from-white to-[#e9e7e5]'
        )}
    >
        {icon}
        {children}
    </button>
);

const CabinetIcon = () => (
    <Svg className="size-[13px]">
        <rect x="1" y="1" width="16" height="16" rx="1" fill="#9b9d99" stroke="#555" />
        <path d="M3 4h12v4H3zM3 10h12v4H3z" fill="#dcddda" stroke="#666" />
        <path d="M7 6h4M7 12h4" stroke="#444" strokeWidth="1.500" />
    </Svg>
);

const FileIcon = ({ color }) => (
    <Svg className="size-[13px]">
        <path d="M2.500 1h9l4 4v12h-13z" fill="#f6f7f6" stroke="#777" />
        <rect x="5" y="7" width="7" height="7" fill={color} />
        <path d="M5 8.500h8M5 11.500h8" stroke="#fff" />
    </Svg>
);

const TaskBar = () => (
    <div className="flex h-5 shrink-0 items-center bg-[#edebe9] pl-[3px] text-[11px] text-[#1c1c1c]">
        <button type="button" aria-label="Mostrar área de trabalho">
            <Svg className="size-[14px]">
                <rect x="2" y="3" width="14" height="12" fill="#a9c3e4" stroke="#2c5288" strokeWidth="2" />
                <path d="M6 12l6-7 2 2-6 6z" fill="#e9cf4a" />
                <path d="M0 2h4M14 2h4M0 16h4M14 16h4" stroke="#2c5288" strokeWidth="3" />
            </Svg>
        </button>
        <span className="w-1" />
        <Grip />
        <div className="ml-[2px] flex gap-[2px]">
            <TaskButton icon={<CabinetIcon />}>Documentos - Navega...</TaskButton>
            <TaskButton icon={<FileIcon color="#a9aba7" />}>CEOS2010.odp - Open...</TaskButton>
            <TaskButton icon={<FileIcon color="#7b9cc8" />} active>RELATORIO 7.doc - Op...</TaskButton>
        </div>
        <button type="button" aria-label="Lixeira" className="ml-auto mr-[44px]">
            <Svg className="size-[17px]">
                <path d="M1 2h16l-1 15H2z" fill="#2f66b3" stroke="#1d4581" />
                <path d="M1 2h16v3H1z" fill="#5f92d6" stroke="#1d4581" />
                <path d="M12 6l3-1-2 4z" fill="#9cc0ee" />
            </Svg>
        </button>
        <div className="flex h-[16px] border border-[#8a8783]">
            <span className="flex w-[26px] items-center justify-center bg-[#d3e3f8]">
                <FileIcon color="#8f9b8c" />
            </span>
            <span className="w-[26px] bg-[#aaa59f]" />
        </div>
    </div>
);

const App = () => {
    const [zoom, setZoom] = useState(162);

    return (
        <div className="relative flex h-screen w-full flex-col overflow-hidden bg-[#edebe9] font-['DejaVu_Sans',sans-serif]">
            <TopPanel />
            <TitleBar />
            <MenuBar />
            <div className="flex h-[33px] shrink-0 items-center border-b border-[#cbc8c4] bg-linear-to-b from-[#f7f6f5] to-[#e5e3e1] pl-[3px]">
                <Grip />
                <span className="w-1" />
                <ToolItems items={mainItems} />
                <Overflow />
            </div>
            <div className="flex h-[33px] shrink-0 items-center bg-linear-to-b from-[#f7f6f5] to-[#e5e3e1] pl-[3px]">
                <Grip />
                <span className="w-[3px]" />
                <ToolButton label="Estilos e formatação" icon={<Styles />} />
                <Combo label="Estilo" value="Padrão" className="ml-[7px] w-[131px]" />
                <Combo label="Fonte" value="Arial" className="ml-[9px] w-[146px]" />
                <Combo label="Tamanho" value="11" className="ml-[8px] mr-[8px] w-[58px]" />
                <ToolItems items={formatItems} />
                <Overflow />
            </div>
            <div className="flex min-h-0 flex-1 border-l-2 border-t-2 border-[#4a4a4a]">
                <div className="flex min-w-0 flex-1 flex-col">
                    <HorizontalRuler />
                    <div className="flex min-h-0 flex-1 border-t border-[#222]">
                        <VerticalRuler />
                        <DocumentPage />
                    </div>
                    <HorizontalScroll />
                </div>
                <VerticalScroll />
            </div>
            <StatusBar zoom={zoom} setZoom={setZoom} />
            <TaskBar />
            <TableToolbar />
        </div>
    );
};

export default App;
